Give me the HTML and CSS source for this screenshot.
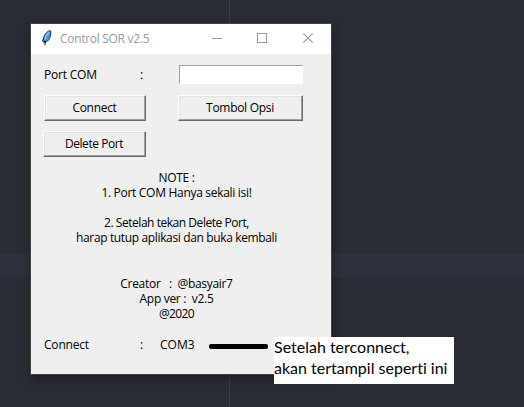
FILE: index.html
```html
<!DOCTYPE html>
<html lang="id">
<head>
<meta charset="utf-8">
<title>Control SOR v2.5</title>
<link rel="stylesheet" href="styles.css">
</head>
<body>
<div class="window">
  <header class="titlebar">
    <svg class="feather" width="12" height="18" viewBox="0 0 12 18">
      <path d="M9.3 1.6 C10.5 3 9.8 6.5 8.6 9.3 C7.6 11.6 6.2 12.6 4 13 C2.2 12 2 9.5 3.2 6.8 C4.4 4.2 6.6 2 9.3 1.6Z" fill="#4f96e6" stroke="#1b212c" stroke-width=".9"/>
      <path d="M8.4 2.8 C6 4.8 4.2 7.8 3.9 10.5" fill="none" stroke="#8fc0f2" stroke-width="1.3"/>
      <path d="M5 11.8 C4.4 13 4.1 14.5 3.9 16.3 M1.8 10.5 V12.5 L4.2 14" fill="none" stroke="#10131a" stroke-width="1"/>
    </svg>
    <span class="title">Control SOR v2.5</span>
    <svg class="controls" width="102" height="12" viewBox="0 0 102 12" fill="none" stroke="#999">
      <path d="M0 6.5H10"/>
      <rect x="45.5" y="1.5" width="9" height="9"/>
      <path d="M91.3 1.3L100.7 10.7M100.7 1.3L91.3 10.7" stroke-width="1.1"/>
    </svg>
  </header>
  <main class="content">
    <div class="row port-row">
      <span class="label port">Port COM</span><span class="colon">:</span><input class="entry" type="text" aria-label="Port COM">
    </div>
    <div class="row buttons">
      <button class="connect"><span>Connect</span></button>
      <button class="options"><span>Tombol Opsi</span></button>
    </div>
    <button class="delete"><span>Delete Port</span></button>
    <div class="note">
      <p class="n1">NOTE :</p>
      <p class="n2">1. Port COM Hanya sekali isi!</p>
      <p class="n3 spaced">2. Setelah tekan Delete Port,</p>
      <p class="n4">harap tutup aplikasi dan buka kembali</p>
    </div>
    <div class="note credits">
      <p class="c1">Creator &nbsp; : &nbsp;@basyair7</p>
      <p class="c2">App ver : &nbsp;v2.5</p>
      <p class="c3">@2020</p>
    </div>
    <div class="row status">
      <span class="label conn">Connect</span><span class="colon">:</span><span class="value">COM3</span>
    </div>
  </main>
</div>
<div class="stroke"></div>
<div class="annotation"><p class="a1">Setelah terconnect,</p><p class="a2">akan tertampil seperti ini</p></div>
</body>
</html>
```
FILE: styles.css
```css
* { box-sizing: border-box; }
body {
  margin: 0;
  padding: 23px 0 0 30px;
  height: 407px;
  overflow: hidden;
  position: relative;
  font: 12px/15px "Open Sans", "Noto Sans", sans-serif;
  color: #000;
  background:
    linear-gradient(#3a3e47, #3a3e47) 229px 0 / 1px 100% no-repeat,
    linear-gradient(#2c313c, #2c313c) 0 253px / 100% 24px no-repeat,
    #282c34;
}
p { margin: 0; }
.window {
  width: 302px;
  height: 352px;
  border: 1px solid #414347;
  background: #efefef;
  box-shadow: 1px 3px 9px rgba(0, 0, 0, .35);
}
.titlebar {
  height: 30px;
  display: flex;
  align-items: flex-start;
  background: #fff;
  color: #999;
}
.feather { margin: 5px 7px 0 10px; }
.title { width: 152px; margin-top: 7px; white-space: nowrap; letter-spacing: -.3px; }
.controls { margin-top: 8px; }
.content { padding: 11px 0 0 12px; }
.row { display: flex; white-space: nowrap; }
.label { width: 96px; margin-left: 1px; }
.colon { width: 20px; }
.port-row { height: 30px; }
.port-row .label, .port-row .colon { margin-top: 2px; }
.entry {
  width: 124px;
  height: 19px;
  margin-left: 19px;
  padding: 0 2px;
  font: inherit;
  outline: 0;
  background: #fff;
  border: 1px solid #a0a0a0;
  border-right-color: #fff;
  border-bottom-color: #fff;
}
button {
  height: 26px;
  padding: 0 1px 2px 0;
  font: inherit;
  letter-spacing: -.3px;
  color: #000;
  background: #efefef;
  border: 1px solid #fff;
  border-right-color: #696969;
  border-bottom-color: #696969;
  box-shadow: inset -1px -1px #a0a0a0, inset 1px 1px #e3e3e3;
}
.connect { width: 102px; margin-left: 1px; }
.options { width: 125px; margin-left: 32px; }
.delete { display: block; width: 103px; margin-top: 10px; letter-spacing: -.45px; }
.note { width: 267px; margin-top: 13px; text-align: center; white-space: nowrap; }
.spaced { margin-top: 15px; }
.credits { margin-top: 31px; }
.status { margin-top: 16px; }
.port, .conn { letter-spacing: -.2px; }
.n1, .n2, .c1, .c2 { letter-spacing: -.3px; }
.n3 { letter-spacing: -.46px; }
.n4 { letter-spacing: -.36px; }
.c3 { letter-spacing: -.6px; }
.stroke {
  position: absolute;
  left: 209px;
  top: 344px;
  width: 59px;
  height: 5px;
  border-radius: 2px;
  background: #000;
}
.annotation {
  position: absolute;
  left: 274px;
  top: 337px;
  width: 180px;
  height: 47px;
  font: 16px/21px Lato, "Open Sans", sans-serif;
  font-variant-ligatures: none;
  white-space: nowrap;
  background: #fff;
}
.annotation p { margin-top: -1px; margin-bottom: 1px; }
```
